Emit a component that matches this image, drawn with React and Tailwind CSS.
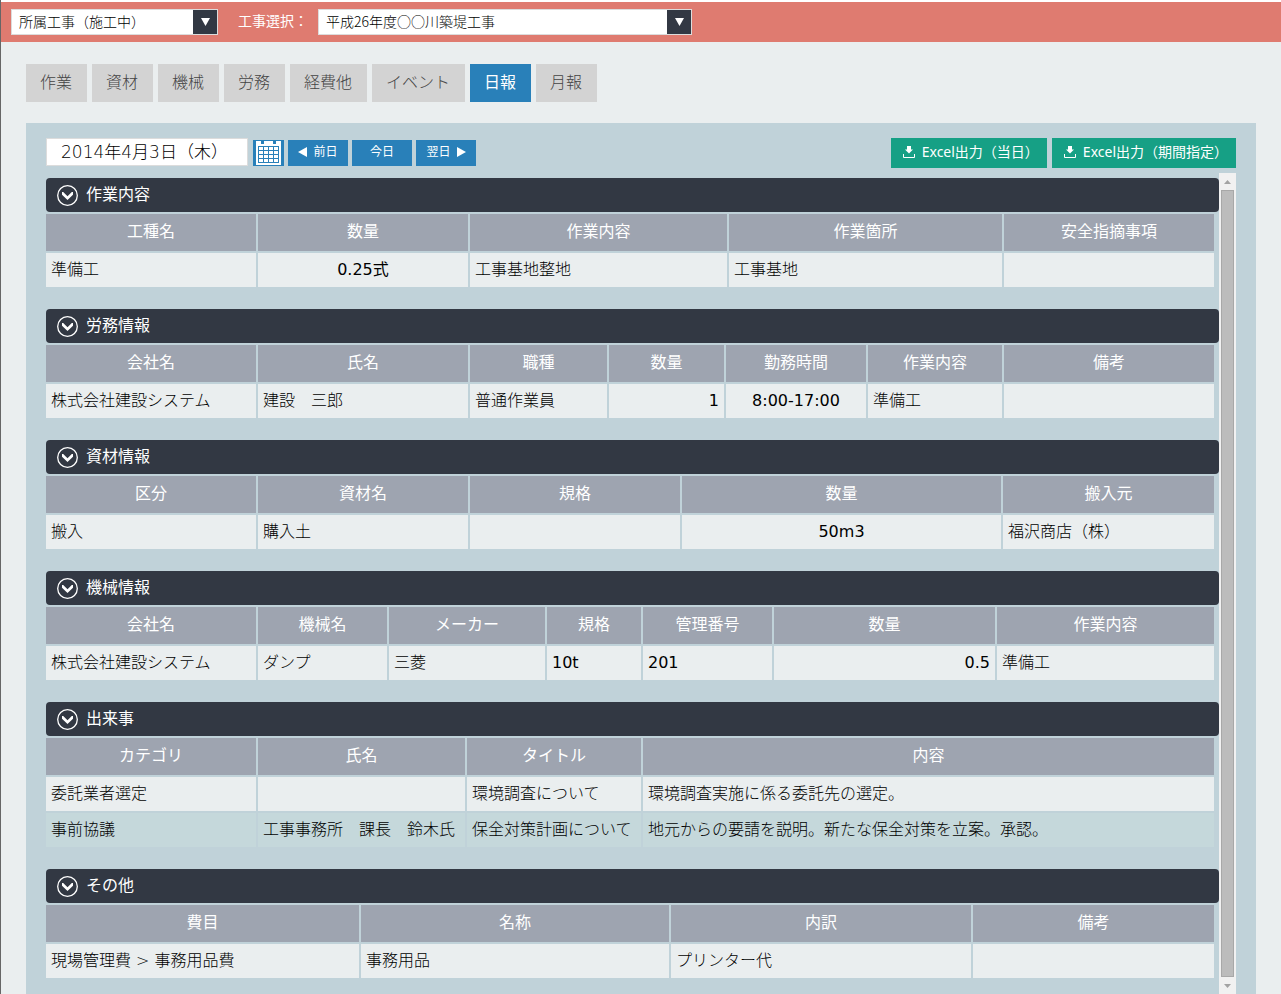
const TABS = ["作業", "資材", "機械", "労務", "経費他", "イベント", "日報", "月報"];

const SECTIONS = [
  {
    title: "作業内容",
    columns: [
      { label: "工種名", width: "w-[212px]" },
      { label: "数量", width: "w-[212px]", align: "text-center" },
      { label: "作業内容", width: "w-[259px]" },
      { label: "作業箇所", width: "w-[275px]" },
      { label: "安全指摘事項" },
    ],
    rows: [["準備工", "0.25式", "工事基地整地", "工事基地", ""]],
  },
  {
    title: "労務情報",
    columns: [
      { label: "会社名", width: "w-[212px]" },
      { label: "氏名", width: "w-[212px]" },
      { label: "職種", width: "w-[139px]" },
      { label: "数量", width: "w-[117px]", align: "text-right" },
      { label: "勤務時間", width: "w-[142px]", align: "text-center" },
      { label: "作業内容", width: "w-[136px]" },
      { label: "備考" },
    ],
    rows: [
      ["株式会社建設システム", "建設　三郎", "普通作業員", "1", "8:00-17:00", "準備工", ""],
    ],
  },
  {
    title: "資材情報",
    columns: [
      { label: "区分", width: "w-[212px]" },
      { label: "資材名", width: "w-[212px]" },
      { label: "規格", width: "w-[212px]" },
      { label: "数量", width: "w-[321px]", align: "text-center" },
      { label: "搬入元" },
    ],
    rows: [["搬入", "購入土", "", "50m3", "福沢商店（株）"]],
  },
  {
    title: "機械情報",
    columns: [
      { label: "会社名", width: "w-[212px]" },
      { label: "機械名", width: "w-[131px]" },
      { label: "メーカー", width: "w-[158px]" },
      { label: "規格", width: "w-[96px]" },
      { label: "管理番号", width: "w-[131px]" },
      { label: "数量", width: "w-[223px]", align: "text-right" },
      { label: "作業内容" },
    ],
    rows: [["株式会社建設システム", "ダンプ", "三菱", "10t", "201", "0.5", "準備工"]],
  },
  {
    title: "出来事",
    columns: [
      { label: "カテゴリ", width: "w-[212px]" },
      { label: "氏名", width: "w-[209px]" },
      { label: "タイトル", width: "w-[176px]" },
      { label: "内容" },
    ],
    rows: [
      ["委託業者選定", "", "環境調査について", "環境調査実施に係る委託先の選定。"],
      [
        "事前協議",
        "工事事務所　課長　鈴木氏",
        "保全対策計画について",
        "地元からの要請を説明。新たな保全対策を立案。承認。",
      ],
    ],
  },
  {
    title: "その他",
    columns: [
      { label: "費目", width: "w-[315px]" },
      { label: "名称", width: "w-[310px]" },
      { label: "内訳", width: "w-[302px]" },
      { label: "備考" },
    ],
    rows: [["現場管理費 > 事務用品費", "事務用品", "プリンター代", ""]],
  },
];

function SelectBox({ id, label, width, children }) {
  return (
    <div className={`relative h-[26px] border border-[#dcdcdc] bg-white ${width}`}>
      <select
        id={id}
        aria-label={label}
        className="h-6 w-full appearance-none bg-transparent pr-7 pb-1 pl-[7px] font-['Noto_Sans_CJK_JP',sans-serif] text-sm leading-5 font-light text-black outline-none"
      >
        {children}
      </select>
      <span className="pointer-events-none absolute inset-y-0 right-0 flex w-6 items-center justify-center bg-[#323843]">
        <svg width="9" height="8" viewBox="0 0 9 8" fill="#fff">
          <path d="M0 0h9L4.5 8z" />
        </svg>
      </span>
    </div>
  );
}

function CalendarIcon() {
  return (
    <svg width="25" height="24" viewBox="0 0 25 24" shapeRendering="crispEdges">
      <path fill="#fff" d="M0 0h5v3h3V0h9v3h3V0h5v24H0z" />
      <path
        fill="none"
        stroke="#2980b9"
        d="M2.5 5.5h20v16h-20zM2.5 9.5h20M2.5 13.5h20M2.5 17.5h20M7.5 5.5v16M12.5 5.5v16M17.5 5.5v16"
      />
    </svg>
  );
}

function ChevronCircle() {
  return (
    <svg width="21" height="21" viewBox="0 0 21 21">
      <circle cx="10.5" cy="10.5" r="9.8" fill="none" stroke="#fff" strokeWidth="1.3" />
      <path fill="#fff" d="M5 7h1.2l4.3 4.2L14.8 7H16v2.8l-5.5 5.2L5 9.8z" />
    </svg>
  );
}

function DownloadIcon() {
  return (
    <svg width="12" height="12" viewBox="0 0 12 12">
      <path fill="#fff" d="M4 0h4v3.5h2L6 7.5 2 3.5h2z" />
      <path fill="none" stroke="#fff" d="M.5 8v3.5h11V8" />
    </svg>
  );
}

function DayButton({ children }) {
  return (
    <button className="flex h-[26px] w-[60px] items-center justify-center gap-1.5 bg-[#2980b9] pb-0.5 text-xs leading-5 text-white">
      {children}
    </button>
  );
}

function ExcelButton({ children }) {
  return (
    <button className="flex h-[30px] items-center gap-[7px] bg-[#16a085] pr-2 pb-0.5 pl-3 text-sm leading-5 text-white font-['Noto_Sans','Noto_Sans_CJK_JP',sans-serif]">
      <DownloadIcon />
      {children}
    </button>
  );
}

function Section({ title, columns, rows }) {
  return (
    <section className="pb-[22px]">
      <h2 className="flex h-[34px] items-center gap-2 rounded bg-[#323843] pl-[11px] text-base text-white">
        <ChevronCircle />
        {title}
      </h2>
      <div className="pr-[3px]">
        <table className="w-full table-fixed border-separate border-spacing-0 text-base leading-6">
          <thead>
            <tr>
              {columns.map((c, i) => (
                <th
                  key={i}
                  className={`h-[39px] border-t-2 border-r-2 border-[#c0d2d9] bg-[#9ea4b0] pb-0.5 font-normal text-white ${c.width ?? ""}`}
                >
                  {c.label}
                </th>
              ))}
            </tr>
          </thead>
          <tbody>
            {rows.map((row, r) => (
              <tr key={r} className="bg-[#eaeeef] even:bg-[#c5d8db]">
                {row.map((cell, i) => (
                  <td
                    key={i}
                    className={`h-9 border-t-2 border-r-2 border-[#c0d2d9] px-[5px] whitespace-nowrap text-black ${columns[i].align ?? "text-left"} ${
                      /^\d/.test(cell) ? "font-normal" : "font-light"
                    }`}
                  >
                    {cell}
                  </td>
                ))}
              </tr>
            ))}
          </tbody>
        </table>
      </div>
    </section>
  );
}

function ScrollBar() {
  return (
    <div className="flex w-[17px] shrink-0 flex-col items-center bg-[#f1f1f1]">
      <div className="flex h-[17px] items-center">
        <svg width="7" height="4" viewBox="0 0 7 4" fill="#a3a3a3">
          <path d="M3.5 0L7 4H0z" />
        </svg>
      </div>
      <div className="w-[13px] flex-1 border border-[#a8a8a8] bg-[#bcbcbc]" />
      <div className="flex h-[17px] items-center">
        <svg width="7" height="4" viewBox="0 0 7 4" fill="#a3a3a3">
          <path d="M3.5 4L7 0H0z" />
        </svg>
      </div>
    </div>
  );
}

export default function App() {
  return (
    <div className="flex h-screen flex-col overflow-hidden border-l border-[#666] bg-[#eaeeef] font-['DejaVu_Sans','Noto_Sans_CJK_JP',sans-serif]">
      <header className="flex h-[42px] shrink-0 items-center border-t-2 border-white bg-[#df7b70] pl-2.5">
        <SelectBox id="belong" label="所属工事" width="w-[207px]">
          <option>所属工事（施工中）</option>
        </SelectBox>
        <label htmlFor="project" className="w-[100px] pb-0.5 pl-5 text-sm whitespace-nowrap text-white">
          工事選択：
        </label>
        <SelectBox id="project" width="w-[374px]">
          <option>平成26年度○○川築堤工事</option>
        </SelectBox>
      </header>

      <nav className="flex shrink-0 gap-[5px] px-[25px] pt-[22px] pb-[21px]">
        {TABS.map((tab) => (
          <button
            key={tab}
            className={`h-[38px] pr-[15px] pl-3.5 text-base ${
              tab === "日報" ? "bg-[#2980b9] text-white" : "bg-[#d3d3d3] font-light text-[#444]"
            }`}
          >
            {tab}
          </button>
        ))}
      </nav>

      <main className="mr-[25px] ml-[25px] flex min-h-0 flex-1 flex-col bg-[#c0d2d9] px-5 pt-[15px]">
        <div className="flex h-[35px] shrink-0 items-start gap-[5px]">
          <input
            type="text"
            aria-label="日付"
            defaultValue="2014年4月3日（木）"
            className="h-7 w-[202px] border border-[#dcdcdc] bg-white pb-1 pl-3.5 text-[17px] leading-6 font-light text-black outline-none"
          />
          <div className="flex gap-1 pt-0.5">
            <button
              aria-label="カレンダー"
              className="flex h-[26px] w-[31px] items-center justify-center bg-[#2980b9]"
            >
              <CalendarIcon />
            </button>
            <DayButton>
              <svg width="9" height="10" viewBox="0 0 9 10" fill="#fff">
                <path d="M9 0v10L0 5z" />
              </svg>
              前日
            </DayButton>
            <DayButton>今日</DayButton>
            <DayButton>
              翌日
              <svg width="9" height="10" viewBox="0 0 9 10" fill="#fff">
                <path d="M0 0v10l9-5z" />
              </svg>
            </DayButton>
          </div>
          <div className="ml-auto flex gap-[5px]">
            <ExcelButton>Excel出力（当日）</ExcelButton>
            <ExcelButton>Excel出力（期間指定）</ExcelButton>
          </div>
        </div>

        <div className="flex min-h-0 flex-1">
          <div className="min-w-0 flex-1 overflow-hidden pt-[5px]">
            {SECTIONS.map((s) => (
              <Section key={s.title} {...s} />
            ))}
          </div>
          <ScrollBar />
        </div>
      </main>
    </div>
  );
}
